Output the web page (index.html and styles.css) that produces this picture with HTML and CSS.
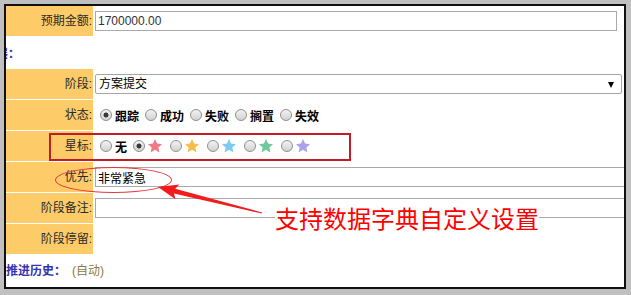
FILE: index.html
```html
<!DOCTYPE html>
<html lang="zh-CN">
<head>
    <meta charset="UTF-8">
    <meta name="viewport" content="width=device-width, initial-scale=1.0">
    <title>商机阶段</title>
    <link rel="stylesheet" href="styles.css">
</head>
<body>
    <div class="panel">
        <div class="row">
            <div class="label">预期金额:</div>
            <div class="field"><input class="text-box amount" type="text" value="1700000.00"></div>
        </div>

        <div class="section-title">展：</div>

        <div class="row">
            <div class="label">阶段:</div>
            <div class="field">
                <div class="select-box"><span>方案提交</span></div>
            </div>
        </div>

        <div class="row">
            <div class="label">状态:</div>
            <div class="field choices">
                <input type="radio" name="status" checked><span class="choice-text">跟踪</span>
                <input type="radio" name="status"><span class="choice-text">成功</span>
                <input type="radio" name="status"><span class="choice-text">失败</span>
                <input type="radio" name="status"><span class="choice-text">搁置</span>
                <input type="radio" name="status"><span class="choice-text">失效</span>
            </div>
        </div>

        <div class="row">
            <div class="label">星标:</div>
            <div class="field choices">
                <input type="radio" name="star"><span class="choice-text">无</span>
                <input type="radio" name="star" checked><svg class="star" viewBox="1.5 1.5 21 21"><path fill="#ef7b89" d="M12 1.5l3.1 6.9 7.4.8-5.5 5 1.6 7.4L12 17.8l-6.6 3.8 1.6-7.4-5.5-5 7.4-.8z"/></svg>
                <input type="radio" name="star"><svg class="star" viewBox="1.5 1.5 21 21"><path fill="#f7bd4c" d="M12 1.5l3.1 6.9 7.4.8-5.5 5 1.6 7.4L12 17.8l-6.6 3.8 1.6-7.4-5.5-5 7.4-.8z"/></svg>
                <input type="radio" name="star"><svg class="star" viewBox="1.5 1.5 21 21"><path fill="#7dcaf4" d="M12 1.5l3.1 6.9 7.4.8-5.5 5 1.6 7.4L12 17.8l-6.6 3.8 1.6-7.4-5.5-5 7.4-.8z"/></svg>
                <input type="radio" name="star"><svg class="star" viewBox="1.5 1.5 21 21"><path fill="#70c99b" d="M12 1.5l3.1 6.9 7.4.8-5.5 5 1.6 7.4L12 17.8l-6.6 3.8 1.6-7.4-5.5-5 7.4-.8z"/></svg>
                <input type="radio" name="star"><svg class="star" viewBox="1.5 1.5 21 21"><path fill="#a7a3ec" d="M12 1.5l3.1 6.9 7.4.8-5.5 5 1.6 7.4L12 17.8l-6.6 3.8 1.6-7.4-5.5-5 7.4-.8z"/></svg>
            </div>
        </div>

        <div class="row">
            <div class="label">优先:</div>
            <div class="field"><input class="text-box long" type="text" value="非常紧急"></div>
        </div>

        <div class="row">
            <div class="label">阶段备注:</div>
            <div class="field"><input class="text-box long" type="text"></div>
        </div>

        <div class="row">
            <div class="label">阶段停留:</div>
            <div class="field"></div>
        </div>

        <div class="history"><span class="history-title">推进历史：</span><span class="auto">(自动)</span></div>

        <!-- callout drawn over the form -->
        <div class="mark-box"></div>
        <div class="mark-ellipse"></div>
        <svg class="mark-arrow" viewBox="0 0 618 281">
            <polygon fill="#f21c1c" points="152,181 173.5,178.4 169.2,182.7 256.1,206.5 255.9,207.5 168,187.4 169.4,193.3"/>
        </svg>
        <div class="mark-note">支持数据字典自定义设置</div>
    </div>
</body>
</html>
```

FILE: styles.css
```css
body {
    margin: 0;
    background-color: #c0c0c0;
    font-family: "Liberation Sans", "Noto Sans CJK SC", sans-serif;
    font-size: 12px;
    color: #222;
}

.panel {
    position: relative;
    margin: 4px;
    width: 618px;
    height: 281px;
    border: 2px solid #111;
    background-color: #fff;
    overflow: hidden;
}

.row {
    display: grid;
    grid-template-columns: 87px 1fr;
    height: 30px;
    margin-bottom: 1px;
}

.label {
    background-color: #fecb69;
    text-align: right;
    padding-right: 1px;
    line-height: 30px;
    color: #2a2a2a;
    white-space: nowrap;
}

.field {
    display: flex;
    align-items: center;
    padding-left: 2px;
    white-space: nowrap;
}

.text-box {
    box-sizing: border-box;
    height: 20px;
    margin: 0;
    padding: 0 2px;
    border: 1px solid #a9a9a9;
    border-radius: 0;
    font-family: "Liberation Sans", "Noto Sans CJK SC", sans-serif;
    font-size: 12px;
    color: #333;
    outline: none;
}

.text-box.amount {
    width: 522px;
}

.text-box.long {
    width: 560px;
    color: #000;
}

.select-box {
    position: relative;
    box-sizing: border-box;
    width: 527px;
    height: 20px;
    padding-left: 3px;
    border: 1px solid #a6a6a6;
    border-radius: 2px;
    line-height: 18px;
    color: #000;
}

.select-box::after {
    content: "";
    position: absolute;
    right: 7px;
    top: 7px;
    border-left: 3px solid transparent;
    border-right: 3px solid transparent;
    border-top: 6px solid #000;
}

.section-title {
    height: 31px;
    margin-bottom: 1px;
    margin-left: -10px;
    line-height: 31px;
    font-family: "Noto Sans CJK TC", sans-serif;
    font-weight: bold;
    color: #3434b0;
}

.choices {
    padding-left: 7px;
}

.choices input[type="radio"] {
    appearance: none;
    -webkit-appearance: none;
    flex-shrink: 0;
    box-sizing: border-box;
    width: 12px;
    height: 12px;
    margin: 0 3px 0 0;
    border: 1px solid #909090;
    border-radius: 50%;
    background: linear-gradient(#f2f2f2, #d2d2d2);
}

.choices input[type="radio"]:checked {
    background: radial-gradient(circle, #3a3a3a 0 2.2px, transparent 2.8px), linear-gradient(#f2f2f2, #d2d2d2);
}

.choice-text {
    margin-right: 6px;
    font-weight: bold;
    color: #000;
}

.star {
    display: block;
    flex-shrink: 0;
    width: 14px;
    height: 14px;
    margin: 0 8px 0 0;
}

.history {
    height: 33px;
    line-height: 33px;
}

.history-title {
    font-weight: bold;
    color: #3434b0;
}

.auto {
    margin-left: 6px;
    color: #8a7a3c;
}

.mark-box {
    position: absolute;
    left: 43px;
    top: 127px;
    box-sizing: border-box;
    width: 302px;
    height: 28px;
    border: 2px solid #c41c24;
}

.mark-ellipse {
    position: absolute;
    left: 49px;
    top: 161px;
    box-sizing: border-box;
    width: 117px;
    height: 26px;
    border: 1px solid #e8353a;
    border-radius: 50%;
}

.mark-arrow {
    position: absolute;
    left: 0;
    top: 0;
    width: 618px;
    height: 281px;
}

.mark-note {
    position: absolute;
    left: 269px;
    top: 200px;
    background-color: #fff;
    font-family: "Noto Sans CJK SC", sans-serif;
    font-size: 24px;
    line-height: 24px;
    color: #ff0000;
    white-space: nowrap;
}
```
